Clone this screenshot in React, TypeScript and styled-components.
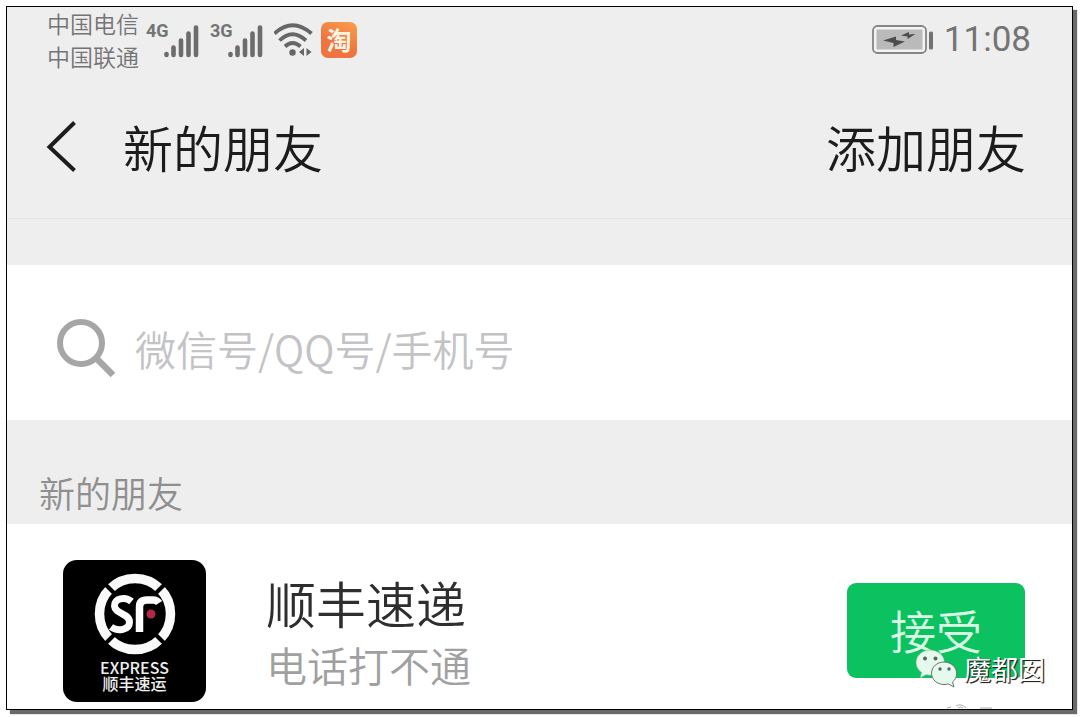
import React from "react";
import styled, { createGlobalStyle } from "styled-components";

const GlobalStyle = createGlobalStyle`
  *, *::before, *::after { box-sizing: border-box; }
  body {
    margin: 0;
    background: #fff;
    font-family: "Noto Sans CJK SC", sans-serif;
    font-weight: 350;
  }
  h1, h2, h3, p { margin: 0; font-weight: inherit; }
`;

const Page = styled.div`
  height: 100vh;
  padding: 6px 7px 7px 6px;
  overflow: hidden;
`;

const Screen = styled.main`
  position: relative;
  display: flex;
  flex-direction: column;
  height: 100%;
  overflow: hidden;
  border: 1px solid #000;
  background: #eee;
`;

const Shadow = styled.div`
  height: 100%;
  box-shadow: 4px 4px 1px #6a6a6c;
`;

const StatusBar = styled.header`
  display: flex;
  flex-shrink: 0;
  justify-content: space-between;
  height: 72px;
  padding: 0 41px 0 40px;
  color: #747474;
`;

const StatusGroup = styled.div<{ $gap: number }>`
  display: flex;
  align-items: center;
  gap: ${(p) => p.$gap}px;
  height: 66px;
`;

const Carriers = styled.div`
  font-size: 23px;
  line-height: 33px;
`;

const Signal = styled.div`
  display: flex;
  align-items: flex-start;
  width: 57px;
  height: 36px;
`;

const Network = styled.span`
  width: 18px;
  font-family: "Liberation Sans Narrow", "Roboto", sans-serif;
  font-size: 18px;
  font-weight: 700;
  line-height: 18px;
`;

const Clock = styled.time`
  font-family: "Roboto", sans-serif;
  font-size: 35px;
  font-weight: 400;
  line-height: 40px;
`;

const TitleBar = styled.nav`
  display: flex;
  flex-shrink: 0;
  align-items: center;
  height: 140px;
  padding: 0 46px 4px 36px;
  border-bottom: 1px solid #e3e3e3;
  color: #1c1c1c;
`;

const BackButton = styled.button`
  display: flex;
  padding: 0;
  border: 0;
  background: none;
  color: inherit;
`;

const Title = styled.h1`
  flex: 1;
  padding: 0 0 2px 40px;
  font-size: 50px;
  line-height: 60px;
`;

const AddLink = styled.a`
  padding-bottom: 2px;
  color: inherit;
  font-size: 50px;
  line-height: 60px;
  text-decoration: none;
`;

const SearchBar = styled.label`
  display: flex;
  flex-shrink: 0;
  align-items: center;
  gap: 18px;
  height: 155px;
  margin-top: 46px;
  padding: 10px 48px 0;
  background: #fff;
`;

const SearchInput = styled.input`
  flex: 1;
  min-width: 0;
  height: 60px;
  padding: 0;
  border: 0;
  outline: 0;
  background: none;
  color: #1c1c1c;
  font: inherit;
  font-size: 41px;
  &::placeholder { color: #c3c3c6; opacity: 1; }
`;

const SectionTitle = styled.h2`
  flex-shrink: 0;
  height: 104px;
  padding: 48px 32px 0;
  color: #8f8f8f;
  font-size: 36px;
  line-height: 48px;
`;

const RequestRow = styled.article`
  display: flex;
  flex: 1;
  align-items: flex-start;
  padding: 36px 47px 0 56px;
  background: #fff;
`;

const Avatar = styled.div`
  display: flex;
  flex-direction: column;
  align-items: center;
  flex-shrink: 0;
  width: 143px;
  height: 142px;
  padding-top: 12px;
  border-radius: 14px;
  background: #000;
  color: #eee;
`;

const AvatarWord = styled.span`
  font-size: 16px;
  font-weight: 500;
  line-height: 16px;
`;

const Details = styled.div`
  flex: 1;
  padding: 10px 0 0 60px;
`;

const Name = styled.h3`
  color: #2e2e2e;
  font-size: 50px;
  line-height: 64px;
`;

const Message = styled.p`
  color: #a0a0a0;
  font-size: 41px;
  line-height: 60px;
`;

const AcceptButton = styled.button`
  width: 178px;
  height: 95px;
  margin-top: 23px;
  padding: 0 0 4px 0;
  border: 0;
  border-radius: 9px;
  background: #0bc160;
  color: #d9fbe6;
  font: inherit;
  font-size: 46px;
  line-height: 60px;
`;

const Watermark = styled.div`
  position: absolute;
  right: 27px;
  bottom: 20px;
  display: flex;
  align-items: center;
  gap: 6px;
  color: #fff;
  font-size: 27px;
  font-weight: 400;
  line-height: 40px;
  text-shadow: 1px 1px 1px #222, 1px 1px 0 #444;
`;

const SourceMark = styled.svg`
  position: absolute;
  right: 60px;
  bottom: 0;
`;

function SignalIcon() {
  return (
    <svg width="36" height="36" viewBox="0 0 36 36" stroke="#6c6c6c" strokeWidth="4.600" strokeLinecap="round" aria-hidden="true">
      <path d="M2.500 32v1M9.500 25.500v7.500M17 18.500v14.500M24.500 11.500v21.500M32 5.500v27.500" />
    </svg>
  );
}

function WifiIcon() {
  return (
    <svg width="40" height="34" viewBox="1 0 40 34" fill="none" stroke="#666" strokeWidth="3.800" aria-hidden="true">
      <path d="M1.500 10.500Q19.500-6 38.500 10.500M6.500 17.500Q19.500 5 33 17.500M12 23.500Q19.500 16.500 27.500 23.500" />
      <circle cx="19.500" cy="29.500" r="3.200" fill="#666" stroke="none" />
      <path d="M31 25v8l-5-4zM33.500 25v8l5-4z" fill="#666" stroke="none" />
    </svg>
  );
}

const ShopBadge = styled.span`
  width: 36px;
  height: 36px;
  border-radius: 7px;
  background: linear-gradient(205deg, #f8a04c, #ef7440 60%);
  color: #fff3e4;
  font-size: 25px;
  font-weight: 700;
  line-height: 35px;
  text-align: center;
`;

function BatteryIcon() {
  return (
    <svg width="62" height="30" viewBox="0 0 62 30" aria-label="充电中" role="img">
      <rect x="1" y="1" width="53" height="27" rx="4.500" fill="#f3f3f3" stroke="#858585" strokeWidth="1.800" />
      <rect x="4.500" y="4.500" width="46" height="20" fill="#bababa" />
      <path d="M11 15.500L24 11.500L24 15L33 16.500L21.500 22L21.500 18zM29 10.500L37 7V9.500L43.500 9L35.500 14V11.500z" fill="#4c4c4c" />
      <rect x="57" y="6.500" width="4" height="18" rx="1.500" fill="#727272" />
    </svg>
  );
}

function SfLogo() {
  return (
    <svg width="82" height="87" viewBox="0 0 82 87" fill="none" aria-hidden="true">
      <circle cx="41" cy="42" r="35.500" stroke="#fafafa" strokeWidth="9.500" />
      <path d="M9 10l16 16M73 10L57 26M9 74l16-16M73 74L57 58" stroke="#000" strokeWidth="4" />
      <path d="M37.500 29.500C31 24 20 26.500 20.500 34C21 42 35.500 41.500 35.500 50C35.500 58 24 60 17 55" stroke="#fff" strokeWidth="7" />
      <path d="M45.500 60V35Q45.500 28 53 28H59Q63 28 65 31" stroke="#fff" strokeWidth="7.500" />
      <circle cx="57" cy="42" r="4.500" fill="#b02a48" />
    </svg>
  );
}

function WeChatIcon() {
  return (
    <svg width="43" height="40" viewBox="0 0 43 40" aria-hidden="true">
      <path d="M15 1C7 1 1 6.500 1 13.500c0 4 2 7.500 5.500 10L5 29l6-3.200c1.300.3 2.600.4 4 .4 8 0 14.500-5.500 14.500-12.700S23 1 15 1z" fill="#e6f9ed" stroke="#69a884" strokeWidth=".5" />
      <path d="M29 13c-7 0-12.500 5-12.500 11.200S22 35.500 29 35.500c1.500 0 3-.2 4.200-.6L39 38l-1.500-5c2.700-2 4.200-5 4.200-8.500C41.700 18 36 13 29 13z" fill="#e6f9ed" stroke="#66756c" strokeWidth="1" />
      <g fill="#56685d">
        <circle cx="10" cy="9.500" r="2" /><circle cx="20.500" cy="9.500" r="2" />
        <circle cx="25" cy="20" r="1.700" /><circle cx="34" cy="20" r="1.700" />
      </g>
    </svg>
  );
}

export default function App() {
  return (
    <>
      <GlobalStyle />
      <Page>
        <Shadow>
          <Screen>
            <StatusBar>
              <StatusGroup $gap={7}>
                <Carriers>
                  <div>中国电信</div>
                  <div>中国联通</div>
                </Carriers>
                <Signal><Network>4G</Network><SignalIcon /></Signal>
                <Signal><Network>3G</Network><SignalIcon /></Signal>
                <WifiIcon />
                <ShopBadge>淘</ShopBadge>
              </StatusGroup>
              <StatusGroup $gap={10}>
                <BatteryIcon />
                <Clock>11:08</Clock>
              </StatusGroup>
            </StatusBar>

            <TitleBar>
              <BackButton aria-label="返回">
                <svg width="40" height="54" viewBox="0 0 40 54" fill="none" stroke="#1c1c1c" strokeWidth="4" aria-hidden="true">
                  <path d="M31.500 2.500L6.500 27L31.500 50.500" />
                </svg>
              </BackButton>
              <Title>新的朋友</Title>
              <AddLink href="#add">添加朋友</AddLink>
            </TitleBar>

            <SearchBar>
              <svg width="62" height="62" viewBox="0 0 62 62" fill="none" stroke="#a6a6a6" aria-hidden="true">
                <circle cx="26" cy="26" r="21" strokeWidth="6" />
                <path d="M41 41l17 17" strokeWidth="6.500" />
              </svg>
              <SearchInput type="text" aria-label="搜索" placeholder="微信号/QQ号/手机号" />
            </SearchBar>

            <SectionTitle>新的朋友</SectionTitle>

            <RequestRow>
              <Avatar>
                <SfLogo />
                <AvatarWord>EXPRESS</AvatarWord>
                <AvatarWord>顺丰速运</AvatarWord>
              </Avatar>
              <Details>
                <Name>顺丰速递</Name>
                <Message>电话打不通</Message>
              </Details>
              <AcceptButton>接受</AcceptButton>
            </RequestRow>

            <Watermark><WeChatIcon />魔都囡</Watermark>
            <SourceMark width="66" height="5" viewBox="0 0 66 5" fill="none" stroke="#aaa" aria-hidden="true">
              <path d="M1 4l4-1M10 2Q15-1 20 4M12 4q3-2 5 0M34 4h12" />
            </SourceMark>
          </Screen>
        </Shadow>
      </Page>
    </>
  );
}
